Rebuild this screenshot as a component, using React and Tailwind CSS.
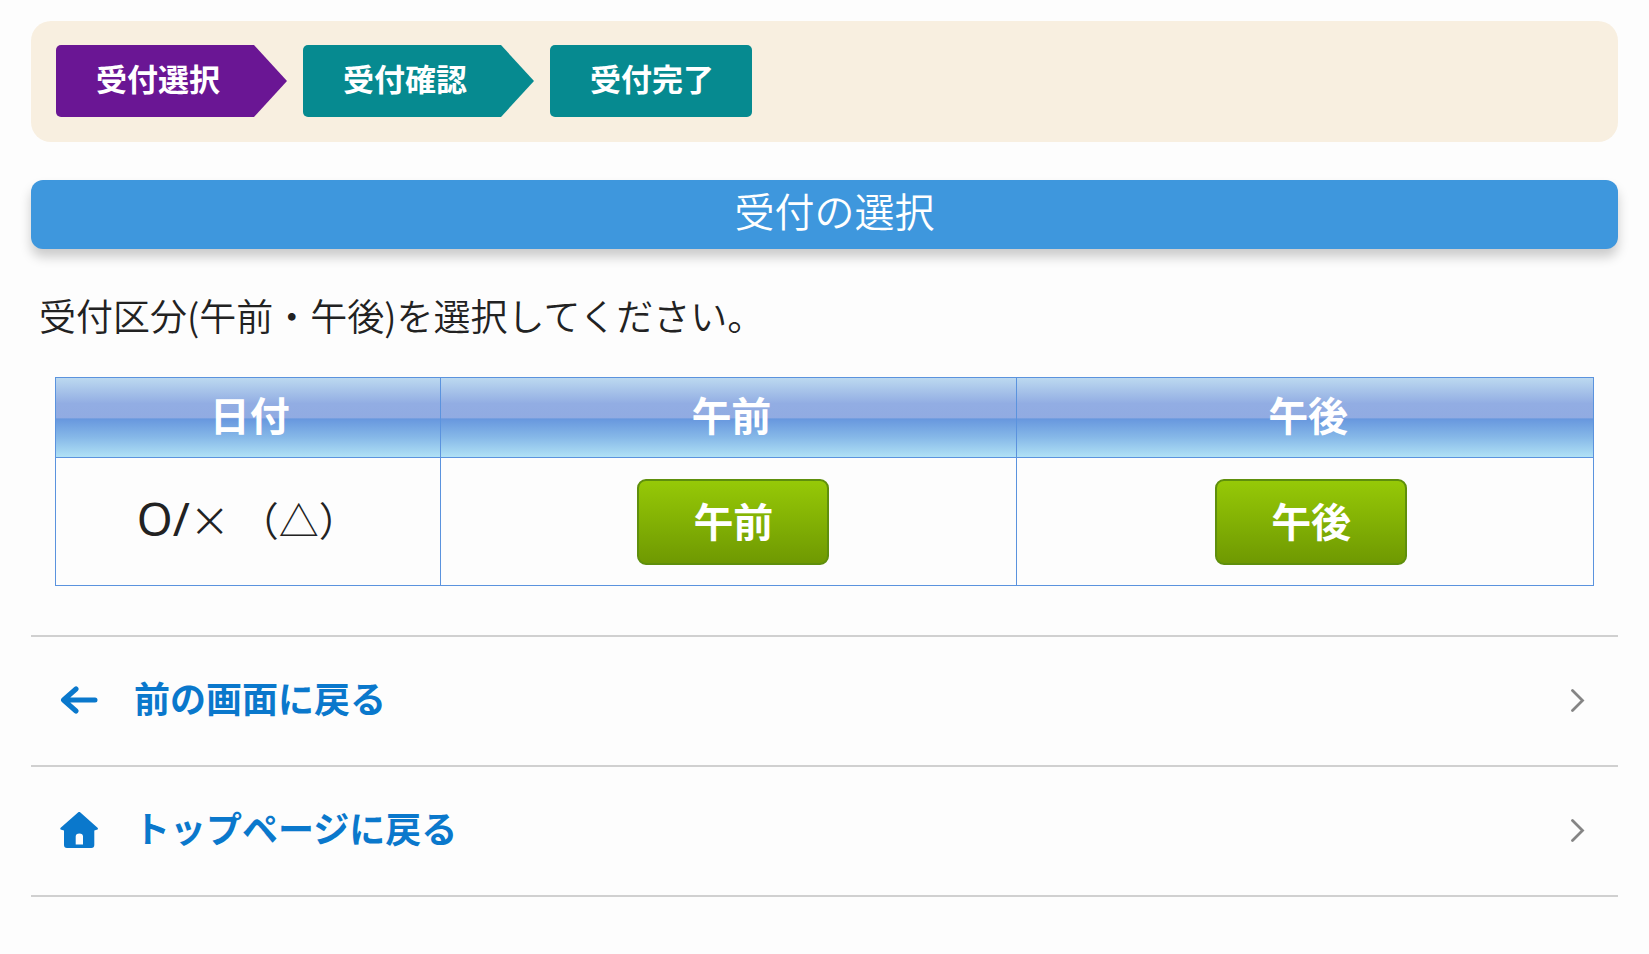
const steps = [
  { label: "受付選択", current: true },
  { label: "受付確認" },
  { label: "受付完了" },
];

const links = [
  { label: "前の画面に戻る", icon: BackIcon },
  { label: "トップページに戻る", icon: HomeIcon },
];

export default function App() {
  return (
    <main className="min-h-screen bg-[#fdfdfd] px-[31px] pt-[21px] font-['Noto_Sans_CJK_JP',sans-serif] text-[#222]">
      <nav aria-label="受付の流れ" className="rounded-[20px] bg-[#f8efe0] px-[25px] pt-6 pb-[25px]">
        <ol className="flex gap-4">
          {steps.map((step, index) => (
            <Step key={step.label} {...step} last={index === steps.length - 1} />
          ))}
        </ol>
      </nav>

      <h1 className="mt-[38px] rounded-xl bg-[#3e97dd] pt-0.5 pb-2.5 pl-5 text-center text-[40px] leading-[57px] font-[350] text-white shadow-[0_8px_12px_rgba(0,0,0,0.2)]">
        受付の選択
      </h1>

      <p className="mt-[38px] pl-2 text-[37px] leading-[56px] font-[350]">受付区分(午前・午後)を選択してください。</p>

      <div className="mt-[34px] px-6">
        <table className="w-full table-fixed border-collapse text-center">
          <thead>
            <tr className="h-20 bg-[linear-gradient(180deg,#bcd9f0_0%,#92ade3_32%,#91abe2_50%,#6797de_51%,#86b8e8_74%,#b2e3f6_100%)] text-[40px] leading-[56px] text-white">
              <th className="w-1/4 border border-[#5b93de] pb-2 pl-1 font-bold">日付</th>
              <th className="border border-[#5b93de] pb-2 pl-1.5 font-bold">午前</th>
              <th className="border border-[#5b93de] pb-2 pl-1.5 font-bold">午後</th>
            </tr>
          </thead>
          <tbody>
            <tr className="h-32">
              <td className="border border-[#5b93de] pb-1.5 text-[40px] leading-[56px] font-[350]">
                <span className="font-['Noto_Sans',sans-serif] text-[46px] font-normal">O/</span>× （△）
              </td>
              <td className="border border-[#5b93de] pl-2.5">
                <SlotButton label="午前" />
              </td>
              <td className="border border-[#5b93de] pl-3">
                <SlotButton label="午後" />
              </td>
            </tr>
          </tbody>
        </table>
      </div>

      <ul className="mt-[49px] border-t-2 border-[#d0d0d0]">
        {links.map(({ label, icon: Icon }) => (
          <li key={label} className="border-b-2 border-[#d0d0d0]">
            <a href="#" className="flex h-32 items-center pr-8 pl-[29px] text-[36px] leading-[56px] font-bold text-[#0a78cc]">
              <Icon />
              <span className="ml-9 flex-1 pb-2">{label}</span>
              <ChevronIcon />
            </a>
          </li>
        ))}
      </ul>
    </main>
  );
}

function Step({ label, current, last }) {
  const color = current ? "bg-[#6a1694]" : "bg-[#068a90]";
  return (
    <li aria-current={current ? "step" : undefined} className="flex text-[31px] leading-[66px] font-bold text-white">
      <span className={`${color} ${last ? "rounded-[5px] pr-[38px]" : "rounded-l-[5px] pr-[34px]"} pb-1.5 pl-10`}>{label}</span>
      {!last && <span className={`${color} w-[33px] [clip-path:polygon(0_0,100%_50%,0_100%)]`} />}
    </li>
  );
}

function SlotButton({ label }) {
  return (
    <button
      type="button"
      className="h-[86px] w-48 rounded-[9px] border-2 border-[#5f8f0c] bg-linear-to-b from-[#96c907] to-[#6f9902] pb-1 text-[40px] leading-[56px] font-bold text-white"
    >
      {label}
    </button>
  );
}

function BackIcon() {
  return (
    <svg viewBox="0 0 38 38" className="size-[38px]" fill="none" stroke="currentColor" strokeWidth="5" strokeLinecap="round" strokeLinejoin="round" aria-hidden="true">
      <path d="M35 18H4M16 7 3.5 18 16 29" />
    </svg>
  );
}

function HomeIcon() {
  return (
    <svg viewBox="0 0 38 38" className="size-[38px]" fill="currentColor" aria-hidden="true">
      <path
        fillRule="evenodd"
        d="M18 .4Q19.200 -.6 20.400 .4L37.800 16Q38.300 17.800 36.800 17.800L34.300 18.500V33Q34.300 36 31.300 36H7Q4 36 4 33V18.500L1.400 17.800Q-.1 17.800 .4 16ZM15.700 32.500H23V24.500Q23 21.500 19.400 21.500Q15.700 21.500 15.700 24.500Z"
      />
    </svg>
  );
}

function ChevronIcon() {
  return (
    <svg viewBox="0 0 16 24" className="h-6 w-4" fill="none" stroke="#858585" strokeWidth="2.8" strokeLinecap="round" aria-hidden="true">
      <path d="M2.500 1.500 12.500 11.500 2.500 21.500" />
    </svg>
  );
}
